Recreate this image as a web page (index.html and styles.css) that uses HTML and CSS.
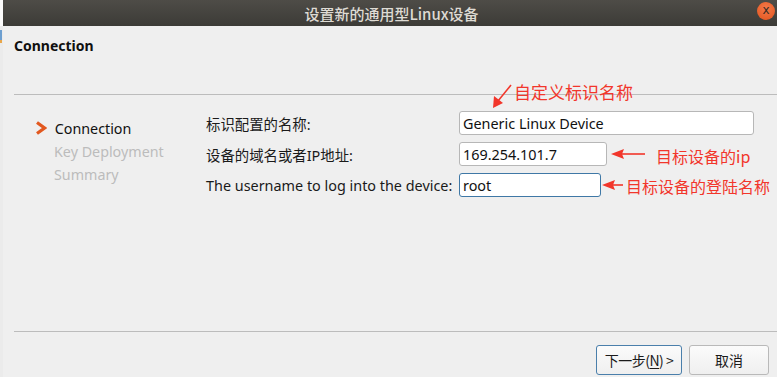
FILE: index.html
```html
<!DOCTYPE html>
<html lang="zh-CN">
<head>
    <meta charset="UTF-8">
    <title>设置新的通用型Linux设备</title>
    <link rel="stylesheet" href="styles.css">
</head>
<body>
    <div class="screen">
        <div class="edge"><span class="edge-mark"></span></div>
        <div class="window">
            <div class="titlebar">
                <span class="title">设置新的通用型Linux设备</span>
                <span class="close">x</span>
            </div>
            <div class="page">
                <div class="page-head">Connection</div>
                <div class="rule top-rule"></div>
                <div class="wizard">
                    <ul class="steps">
                        <li class="step current">
                            <svg class="step-arrow" width="12" height="14" viewBox="0 0 12 14">
                                <path d="M2 1.5 L9.5 7 L2 12.5" fill="none" stroke="#e2581f" stroke-width="3.2" stroke-linejoin="miter"/>
                            </svg>
                            Connection
                        </li>
                        <li class="step">Key Deployment</li>
                        <li class="step">Summary</li>
                    </ul>
                    <div class="form">
                        <label class="form-label">标识配置的名称:</label>
                        <div class="field wide">Generic Linux Device</div>
                        <label class="form-label">设备的域名或者IP地址:</label>
                        <div class="field mid">169.254.101.7</div>
                        <label class="form-label">The username to log into the device:</label>
                        <div class="field short focused">root</div>
                    </div>
                </div>
                <div class="rule"></div>
                <div class="buttons">
                    <button class="btn default">下一步(<u>N</u>) &gt;</button>
                    <button class="btn">取消</button>
                </div>
            </div>

            <!-- red notes drawn on the screenshot -->
            <div class="note note-name">自定义标识名称</div>
            <div class="note note-ip">目标设备的ip</div>
            <div class="note note-user">目标设备的登陆名称</div>
            <svg class="arrows" width="774" height="377" viewBox="3 0 774 377">
                <g fill="#f2362b" stroke="#f2362b">
                    <line x1="511" y1="85" x2="498" y2="101" stroke-width="1.6"/>
                    <path d="M493 108 L494 96 L503 103 Z" stroke="none"/>
                    <line x1="645" y1="154" x2="620" y2="154" stroke-width="1.6"/>
                    <path d="M611 154 L624 149 L622 154 L624 159 Z" stroke="none"/>
                    <line x1="623" y1="185" x2="611" y2="185" stroke-width="1.6"/>
                    <path d="M602 185 L615 180 L613 185 L615 190 Z" stroke="none"/>
                </g>
            </svg>
        </div>
    </div>
</body>
</html>
```

FILE: styles.css
```css
body {
    margin: 0;
    background: #efefef;
    font-family: "Noto Sans", "Noto Sans CJK SC", sans-serif;
    color: #1a1a1a;
}
.screen {
    display: flex;
    width: 777px;
    height: 377px;
    overflow: hidden;
}
.edge {
    width: 3px;
    background: #ebebeb;
    border-top: 26px solid #fafafa;
    position: relative;
}
.edge-mark {
    position: absolute;
    left: 0;
    top: 4px;
    width: 2px;
    height: 10px;
    background: #6d9fd0;
    border-bottom: 3px solid #e8a64a;
}
.window {
    flex: 1;
    position: relative;
    display: flex;
    flex-direction: column;
}
.titlebar {
    height: 26px;
    background: linear-gradient(#4e4c47, #3c3b37);
    display: flex;
    align-items: center;
    justify-content: center;
    position: relative;
}
.title {
    color: #dedbd4;
    font-family: "Noto Sans CJK SC", sans-serif;
    font-size: 15px;
    font-weight: 500;
    margin-left: 3px;
}
.close {
    position: absolute;
    right: 2px;
    top: 2px;
    width: 18px;
    height: 18px;
    border-radius: 50%;
    background: radial-gradient(circle at 50% 35%, #f47a4a, #e2531c);
    color: #3a2a22;
    font-size: 12px;
    line-height: 16px;
    text-align: center;
    font-family: "DejaVu Sans", sans-serif;
}
.page {
    flex: 1;
    padding-left: 11px;
    display: flex;
    flex-direction: column;
}
.page-head {
    font-weight: bold;
    font-size: 14px;
    line-height: 18px;
    padding-top: 11px;
    color: #101010;
}
.rule {
    height: 1px;
    background: #bcbcbc;
}
.top-rule {
    margin-top: 39px;
}
.wizard {
    height: 236px;
    display: flex;
}
.steps {
    list-style: none;
    margin: 0;
    padding: 22px 0 0 40px;
    width: 152px;
    font-size: 14.3px;
    line-height: 23px;
}
.step {
    color: #bcbcbc;
}
.step.current {
    color: #111;
    margin-left: -19px;
}
.step-arrow {
    margin-right: 4px;
    vertical-align: -1px;
}
.form {
    display: grid;
    grid-template-columns: 253px auto;
    grid-auto-rows: 24px;
    row-gap: 7px;
    padding-top: 16px;
    font-size: 14.4px;
    align-items: center;
    align-content: start;
}
.form-label {
    color: #1a1a1a;
    padding-top: 1px;
}
.field {
    height: 24px;
    box-sizing: border-box;
    background: #fff;
    border: 1px solid #b7b7b7;
    border-radius: 3px;
    padding: 1px 3px 0;
    line-height: 22px;
    color: #111;
}
.wide { width: 295px; }
.mid { width: 148px; }
.short { width: 142px; }
.focused {
    border-color: #3f78a6;
}
.buttons {
    display: flex;
    justify-content: flex-end;
    gap: 7px;
    padding: 13px 8px 0 0;
}
.btn {
    height: 30px;
    border: 1px solid #b9b9b9;
    border-radius: 3px;
    background: linear-gradient(#fbfbfb, #efefef);
    font-family: "Noto Sans CJK SC", sans-serif;
    font-size: 14px;
    color: #1a1a1a;
    padding: 0;
    width: 80px;
}
.btn.default {
    width: 86px;
    border-color: #4a7fab;
    letter-spacing: -0.5px;
}
.btn u {
    text-underline-offset: 2px;
}
.note {
    position: absolute;
    color: #f2362b;
    font-family: "Noto Sans CJK SC", sans-serif;
    font-size: 16px;
    line-height: 20px;
    white-space: nowrap;
}
.note-name {
    left: 511px;
    top: 82px;
    font-size: 17px;
}
.note-ip {
    left: 653px;
    top: 146px;
}
.note-user {
    left: 623px;
    top: 176px;
}
.arrows {
    position: absolute;
    left: 0;
    top: 0;
    pointer-events: none;
}
```
